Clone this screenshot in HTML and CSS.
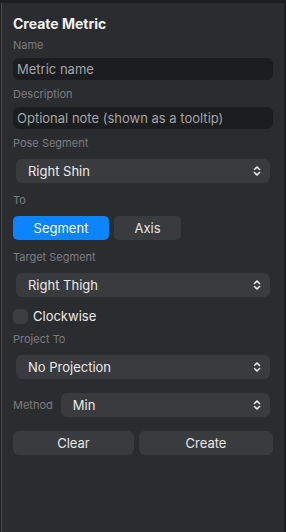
FILE: index.html
```html
<!DOCTYPE html>
<html lang="en">
<head>
  <meta charset="UTF-8">
  <meta name="viewport" content="width=device-width, initial-scale=1.0">
  <title>Create Metric</title>
  <link rel="stylesheet" href="styles.css">
</head>
<body>
  <div class="panel">
    <h1>Create Metric</h1>

    <div class="label">Name</div>
    <div class="input">Metric name</div>

    <div class="label">Description</div>
    <div class="input">Optional note (shown as a tooltip)</div>

    <div class="label">Pose Segment</div>
    <div class="select"><span>Right Shin</span><svg class="chev" viewBox="0 0 8 12"><path d="M1.5 4.5 4 2l2.5 2.5M1.5 7.5 4 10l2.5-2.5"/></svg></div>

    <div class="label">To</div>
    <div class="seg">
      <div class="seg-btn active">Segment</div>
      <div class="seg-btn">Axis</div>
    </div>

    <div class="label">Target Segment</div>
    <div class="select"><span>Right Thigh</span><svg class="chev" viewBox="0 0 8 12"><path d="M1.5 4.5 4 2l2.5 2.5M1.5 7.5 4 10l2.5-2.5"/></svg></div>

    <label class="check"><span class="box"></span>Clockwise</label>

    <div class="label">Project To</div>
    <div class="select"><span>No Projection</span><svg class="chev" viewBox="0 0 8 12"><path d="M1.5 4.5 4 2l2.5 2.5M1.5 7.5 4 10l2.5-2.5"/></svg></div>

    <div class="method">
      <span class="label">Method</span>
      <div class="select"><span>Min</span><svg class="chev" viewBox="0 0 8 12"><path d="M1.5 4.5 4 2l2.5 2.5M1.5 7.5 4 10l2.5-2.5"/></svg></div>
    </div>

    <div class="actions">
      <div class="btn clear">Clear</div>
      <div class="btn create">Create</div>
    </div>
  </div>
</body>
</html>
```

FILE: styles.css
```css
body { margin: 0; background: #1d1e20; font-family: Inter, "Noto Sans", sans-serif; height: 532px; overflow: hidden; }
.panel { margin: 3px 2px 0 1px; height: 540px; box-sizing: border-box; background: #2b2c2f; border-left: 1px solid #4a4b4e; border-bottom-left-radius: 12px; padding: 12px 11px 0 11px; }
h1 { font-size: 14px; font-weight: 700; color: #f2f2f2; margin: 0 0 5px; line-height: 18px; }
.label { font-size: 11px; color: #7b7c80; line-height: 14px; margin-bottom: 6px; }
.input { height: 22px; line-height: 22px; background: #1c1d1f; border-radius: 6px; padding: 0 4px; font-size: 13px; color: #a3a4a8; margin-bottom: 7px; }
.select { height: 24px; display: flex; align-items: center; justify-content: space-between; background: #3a3b3e; border-radius: 6px; margin: 9px 3px 10px 3px; padding: 0 9px 0 12px; font-size: 13px; color: #ebebeb; }
.label + .select { margin-top: 9px; }
.chev { width: 8px; height: 12px; fill: none; stroke: #f0f0f0; stroke-width: 1.6; stroke-linecap: round; stroke-linejoin: round; }
.seg { display: flex; gap: 5px; margin: 9px 0 10px; }
.seg-btn { height: 24px; line-height: 24px; text-align: center; border-radius: 5px; font-size: 13px; background: #3a3b3e; color: #e6e6e6; width: 67px; }
.seg-btn.active { width: 96px; background: #0a84ff; color: #fff; }
.check { display: flex; align-items: center; gap: 5px; font-size: 13px; color: #ebebeb; margin: 11px 0 8px; }
.box { width: 15px; height: 15px; border-radius: 5px; background: #3d3e41; }
.method { display: flex; align-items: center; gap: 8px; margin-top: 14px; }
.method .label { margin: 0; }
.method .select { flex: 1; margin: 0 3px 0 0; }
.actions { display: flex; gap: 5px; margin-top: 14px; }
.btn { height: 24px; line-height: 24px; text-align: center; background: #3a3b3e; border-radius: 6px; font-size: 13px; color: #e6e6e6; }
.clear { width: 121px; }
.create { flex: 1; }
```
